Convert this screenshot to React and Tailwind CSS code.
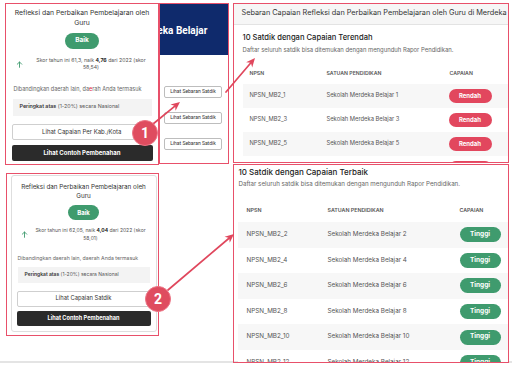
import React from "react";

function Arrow({ x1, y1, x2, y2 }) {
  const dx = x2 - x1;
  const dy = y2 - y1;
  const len = Math.sqrt(dx * dx + dy * dy);
  const ux = dx / len;
  const uy = dy / len;
  const hl = 9;
  const hw = 4;
  const bx = x2 - ux * hl;
  const by = y2 - uy * hl;
  const px = -uy;
  const py = ux;
  const pts = `${x2},${y2} ${bx + px * hw},${by + py * hw} ${x2 - ux * hl * 0.7},${y2 - uy * hl * 0.7} ${bx - px * hw},${by - py * hw}`;
  return (
    <g>
      <line x1={x1} y1={y1} x2={x2 - ux * 5} y2={y2 - uy * 5} stroke="#e0475d" strokeWidth="1.7" strokeLinecap="round" />
      <polygon points={pts} fill="#e0475d" />
    </g>
  );
}

function ArrowUp({ className }) {
  return (
    <svg className={className} viewBox="0 0 10 10" width="7" height="7">
      <path d="M5 9V1.5M1.8 4.6L5 1.4l3.2 3.2" fill="none" stroke="#3f9b6e" strokeWidth="1.3" strokeLinecap="round" strokeLinejoin="round" />
    </svg>
  );
}

function Card1() {
  return (
    <div className="mt-[3px] h-[162px] w-[154px] border-[1.5px] border-[#e8506a] flex flex-col items-stretch">
      <div className="mt-[3.5px] px-[6px] text-center text-[6.8px] leading-[10px] text-[#333]">
        Refleksi dan Perbaikan Pembelajaran oleh Guru
      </div>
      <div className="mt-[5px] self-center w-[34px] h-[16px] rounded-full bg-[#3f9b6e] text-white text-[6.5px] font-bold flex items-center justify-center">
        Baik
      </div>
      <div className="mt-[8.5px] flex items-center pl-[10px] pr-[4px]">
        <ArrowUp className="shrink-0" />
        <div className="flex-1 pl-[5px] text-center text-[5.2px] leading-[7px] text-[#555]">
          Skor tahun ini 61,3, naik <span className="font-bold text-[#222]">4,76</span> dari 2022 (skor 58,54)
        </div>
      </div>
      <div className="mt-[15px] pl-[7.5px] text-[5.5px] leading-[7px] text-[#666] whitespace-nowrap">
        Dibandingkan daerah lain, da<span className="text-[#e0283a]">e</span>rah Anda termasuk
      </div>
      <div className="mt-[5.5px] mx-[6.5px] h-[17px] bg-[#f3f3f3] flex items-center pl-[7px] text-[5.3px] text-[#555] whitespace-nowrap">
        <span className="font-semibold text-[#333]">Peringkat atas</span>&nbsp;(1-20%) secara Nasional
      </div>
      <div className="mt-[8px] ml-[5.5px] mr-[6px] h-[16px] border border-[#cfcfcf] rounded-[2px] bg-white flex items-center justify-center text-[6px] text-[#333] whitespace-nowrap">
        Lihat Capaian Per Kab./Kota
      </div>
      <div className="mt-[5px] ml-[5.5px] mr-[5.5px] h-[16px] rounded-[2px] bg-[#2b2b2b] flex items-center justify-center text-[6px] font-bold text-white whitespace-nowrap">
        Lihat Contoh Pembenahan
      </div>
    </div>
  );
}

function Card2() {
  return (
    <div className="mt-[8px] ml-[1px] w-[153px] h-[163px] border-[1.5px] border-[#e8506a] pt-[0.5px] pl-[3.5px] pr-[1.5px]">
      <div className="h-[157px] border border-[#dedede] rounded-[3px] flex flex-col items-stretch">
        <div className="mt-[7.5px] px-[8px] text-center text-[6.3px] leading-[8.5px] text-[#333]">
          Refleksi dan Perbaikan Pembelajaran oleh Guru
        </div>
        <div className="mt-[5px] self-center w-[31px] h-[15px] rounded-full bg-[#3f9b6e] text-white text-[6px] font-bold flex items-center justify-center">
          Baik
        </div>
        <div className="mt-[6px] flex items-center pl-[9px] pr-[6px]">
          <ArrowUp className="shrink-0" />
          <div className="flex-1 pl-[4px] text-center text-[5px] leading-[8px] text-[#555]">
            Skor tahun ini 62,05, naik <span className="font-bold text-[#222]">4,04</span> dari 2022 (skor 58,01)
          </div>
        </div>
        <div className="mt-[13px] pl-[6px] text-[5.2px] leading-[7px] text-[#666] whitespace-nowrap">
          Dibandingkan daerah lain, daerah Anda termasuk
        </div>
        <div className="mt-[4.5px] mx-[6px] h-[16px] bg-[#f3f3f3] flex items-center pl-[7px] text-[5px] text-[#555] whitespace-nowrap">
          <span className="font-semibold text-[#333]">Peringkat atas</span>&nbsp;(1-20%) secara Nasional
        </div>
        <div className="mt-[8px] mx-[5px] h-[16px] border border-[#cfcfcf] rounded-[2px] bg-white flex items-center justify-center text-[5.8px] text-[#333] whitespace-nowrap">
          Lihat Capaian Satdik
        </div>
        <div className="mt-[4px] mx-[5px] h-[15px] rounded-[2px] bg-[#2b2b2b] flex items-center justify-center text-[5.6px] font-bold text-white whitespace-nowrap">
          Lihat Contoh Pembenahan
        </div>
      </div>
    </div>
  );
}

function Middle() {
  return (
    <div className="mt-[3px] w-[70px] h-[161px] border-[1.5px] border-[#e8506a] flex flex-col overflow-hidden">
      <div className="h-[51px] bg-[#0f2a6c] flex items-center overflow-hidden pt-[1px]">
        <span className="ml-[-26px] whitespace-nowrap text-white font-bold text-[10px] [font-family:Roboto,sans-serif]">
          Merdeka Belajar
        </span>
      </div>
      <div className="flex flex-col items-start pl-[4px]">
        {[31, 14, 14].map((m, i) => (
          <div
            key={i}
            style={{ marginTop: m }}
            className="h-[12px] w-[58px] border border-[#bdbdbd] rounded-[2px] bg-white flex items-center justify-center text-[5px] text-[#333] whitespace-nowrap [font-family:Roboto,sans-serif]"
          >
            Lihat Sebaran Satdik
          </div>
        ))}
      </div>
    </div>
  );
}

function Badge({ kind, w, h, size }) {
  const red = kind === "Rendah";
  return (
    <div
      className={`rounded-full flex items-center justify-center text-white font-bold ${red ? "bg-[#e2475e]" : "bg-[#3f9b6e]"}`}
      style={{ width: w, height: h, fontSize: size }}
    >
      {kind}
    </div>
  );
}

function Box3() {
  const rows = [1, 3, 5, 7];
  return (
    <div className="mt-[3px] h-[160px] w-[276px] border-[1.5px] border-[#e8506a] overflow-hidden flex flex-col">
      <div className="h-[20.5px] shrink-0 bg-[#f6f6f6] border-b border-[#e3e3e3] flex items-center pl-[7.5px] text-[7.3px] text-[#333] whitespace-nowrap overflow-hidden">
        Sebaran Capaian Refleksi dan Perbaikan Pembelajaran oleh Guru di Merdeka Belajar
      </div>
      <div className="mt-[8px] pl-[8.5px] text-[7.6px] leading-[10px] font-medium text-[#222] whitespace-nowrap">
        10 Satdik dengan Capaian Terendah
      </div>
      <div className="mt-[3px] pl-[8.5px] text-[5.9px] leading-[8px] text-[#666] whitespace-nowrap">
        Daftar seluruh satdik bisa ditemukan dengan mengunduh Rapor Pendidikan.
      </div>
      <div className="mt-[15px] ml-[8.5px] px-[7px] grid grid-cols-[77px_123px_1fr] text-[5.2px] leading-[8px] font-semibold text-[#555]">
        <div>NPSN</div>
        <div>SATUAN PENDIDIKAN</div>
        <div>CAPAIAN</div>
      </div>
      <div className="mt-[7px] ml-[8.5px] flex flex-col">
        {rows.map((n, i) => (
          <div
            key={n}
            className={`shrink-0 h-[24px] px-[7px] grid grid-cols-[77px_123px_1fr] items-center text-[5.8px] text-[#555] ${i % 2 === 0 ? "bg-[#f7f7f7]" : "bg-white"}`}
          >
            <div>NPSN_MB2_{n}</div>
            <div>Sekolah Merdeka Belajar {n}</div>
            <div className="-ml-[1px]">
              <Badge kind="Rendah" w={43} h={14} size={6} />
            </div>
          </div>
        ))}
      </div>
    </div>
  );
}

function Box4() {
  const rows = [2, 4, 6, 8, 10, 12];
  return (
    <div className="mt-[1px] h-[199px] w-[276px] border-[1.5px] border-[#e8506a] overflow-hidden flex flex-col">
      <div className="mt-[2.5px] pl-[4.5px] text-[8px] leading-[9px] font-medium text-[#222] whitespace-nowrap">
        10 Satdik dengan Capaian Terbaik
      </div>
      <div className="mt-[3.5px] pl-[4.5px] text-[6.2px] leading-[8px] text-[#666] whitespace-nowrap">
        Daftar seluruh satdik bisa ditemukan dengan mengunduh Rapor Pendidikan.
      </div>
      <div className="mt-[18px] ml-[3.5px] px-[9px] grid grid-cols-[81px_132px_1fr] text-[5.3px] leading-[8px] font-semibold text-[#555]">
        <div>NPSN</div>
        <div>SATUAN PENDIDIKAN</div>
        <div>CAPAIAN</div>
      </div>
      <div className="mt-[8px] ml-[3.5px] flex flex-col">
        {rows.map((n, i) => (
          <div
            key={n}
            className={`shrink-0 h-[25.6px] px-[9px] grid grid-cols-[81px_132px_1fr] items-center text-[6.3px] text-[#555] ${i % 2 === 0 ? "bg-[#f7f7f7]" : "bg-white"}`}
          >
            <div>NPSN_MB2_{n}</div>
            <div>Sekolah Merdeka Belajar {n}</div>
            <div>
              <Badge kind="Tinggi" w={41} h={15} size={6.5} />
            </div>
          </div>
        ))}
      </div>
    </div>
  );
}

export default function App() {
  return (
    <div className="relative w-[512px] h-[365px] overflow-hidden bg-white [font-family:Inter,sans-serif]">
      <div className="absolute left-0 right-0 top-[361px] h-[2px] bg-[#e4e4e4]" />
      <div className="relative flex items-start">
        <div className="ml-[5px] flex flex-col">
          <Card1 />
          <Card2 />
        </div>
        <Middle />
        <div className="ml-[4px] flex flex-col">
          <Box3 />
          <Box4 />
        </div>
      </div>

      <svg className="absolute inset-0 pointer-events-none" width="512" height="365">
        <Arrow x1={153} y1={124} x2={180} y2={102} />
        <Arrow x1={226} y1={92} x2={255} y2={58} />
        <Arrow x1={168} y1={290} x2={234} y2={234} />
      </svg>

      <div className="absolute left-[132px] top-[120px] w-[26px] h-[26px] rounded-full bg-[#df4c5f] border border-[#ec7384] flex items-center justify-center text-white font-bold text-[14px] [font-family:Roboto,sans-serif]">
        1
      </div>
      <div className="absolute left-[145px] top-[286px] w-[26px] h-[26px] rounded-full bg-[#df4c5f] border border-[#ec7384] flex items-center justify-center text-white font-bold text-[14px] [font-family:Roboto,sans-serif]">
        2
      </div>
    </div>
  );
}
